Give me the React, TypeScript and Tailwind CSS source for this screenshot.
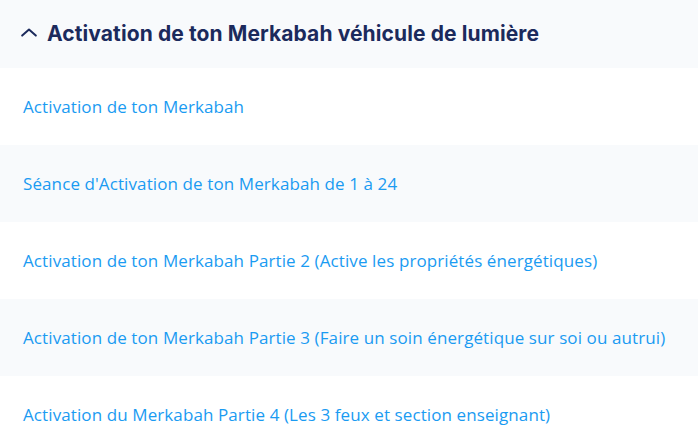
const LESSONS = [
  "Activation de ton Merkabah",
  "Séance d'Activation de ton Merkabah de 1 à 24",
  "Activation de ton Merkabah Partie 2 (Active les propriétés énergétiques)",
  "Activation de ton Merkabah Partie 3 (Faire un soin énergétique sur soi ou autrui)",
  "Activation du Merkabah Partie 4 (Les 3 feux et section enseignant)",
];

export default function App() {
  return (
    <div className="min-h-screen bg-white">
      {/* Section header */}
      <div className="h-[68px] bg-[#f8fafc] flex items-center pl-[21px] gap-[10px]">
        <svg
          width="16"
          height="9"
          viewBox="0 0 16 9"
          fill="none"
          className="text-[#1b2a5c] mt-[-3px]"
        >
          <path
            d="M1.2 7.6 8 1.6l6.8 6"
            stroke="currentColor"
            strokeWidth="2"
            strokeLinecap="round"
            strokeLinejoin="round"
          />
        </svg>
        <h2
          className="text-[21px] font-bold text-[#1b2a5c] tracking-[0.1px]"
          style={{ fontFamily: "Inter, 'Noto Sans', sans-serif" }}
        >
          Activation de ton Merkabah véhicule de lumière
        </h2>
      </div>

      {/* Lessons */}
      <ul>
        {LESSONS.map((title, i) => (
          <li
            key={title}
            className={`h-[77px] flex items-center pl-[23px] ${
              i % 2 === 1 ? "bg-[#f8fafc]" : "bg-white"
            }`}
          >
            <a
              href="#"
              className="text-[17px] text-[#1a9bf2] tracking-[0.1px]"
              style={{ fontFamily: "'Open Sans', 'Noto Sans', sans-serif" }}
            >
              {title}
            </a>
          </li>
        ))}
      </ul>
    </div>
  );
}
